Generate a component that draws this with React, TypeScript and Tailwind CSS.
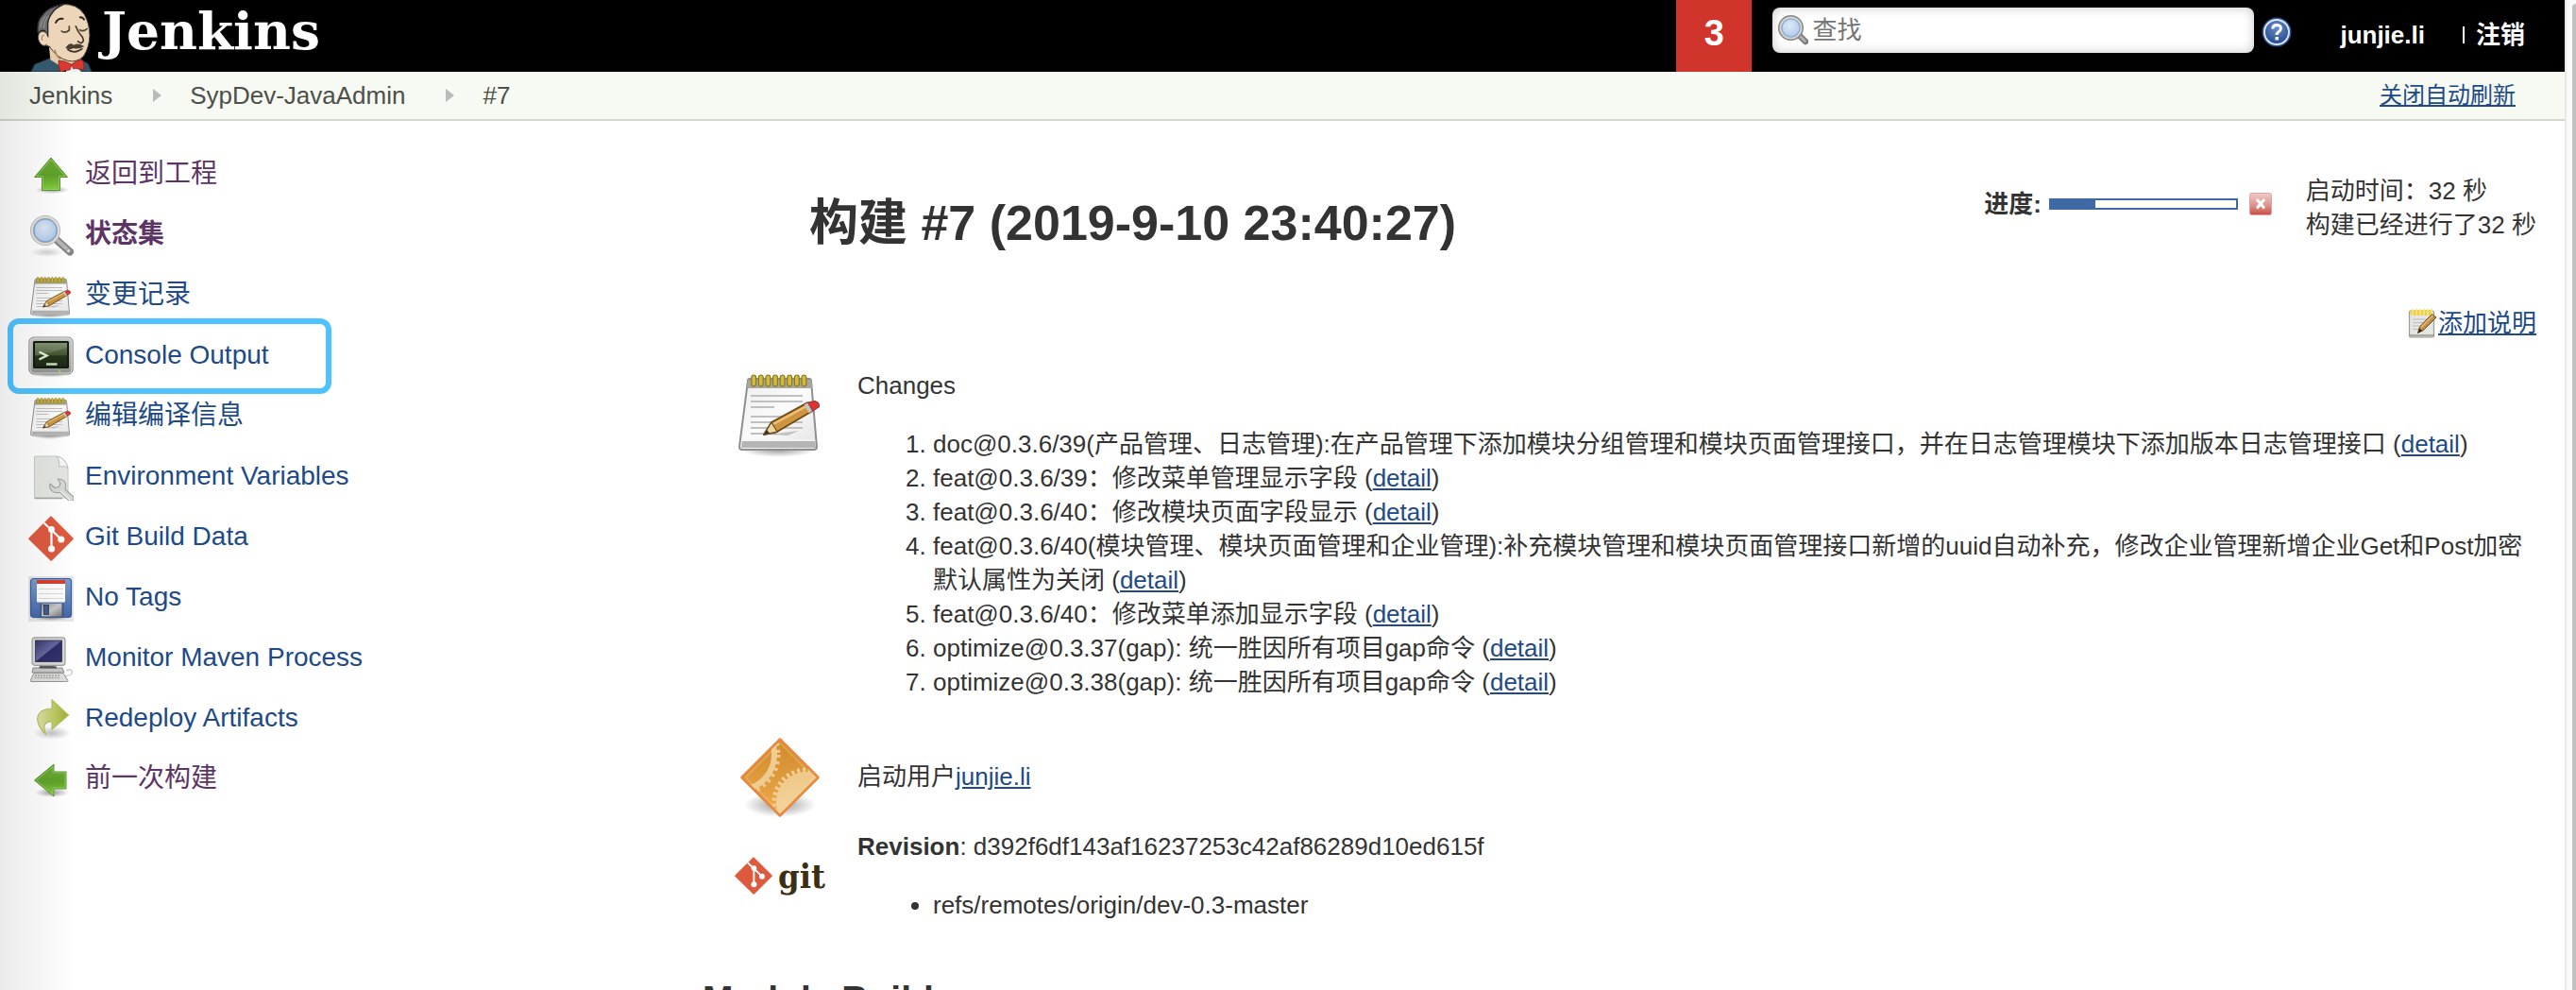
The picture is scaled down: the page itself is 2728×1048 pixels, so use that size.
import React from "react";

const SANS = "font-['Liberation_Sans','Noto_Sans_CJK_SC',sans-serif]";
const LINK = "text-[#204a87] underline";

/* ---------- shared gradients ---------- */

function Gradients() {
  return (
    <svg width="0" height="0" className="absolute" aria-hidden="true">
      <defs>
        <linearGradient id="green" x1="0" y1="0" x2="0" y2="1">
          <stop offset="0" stopColor="#6aa834" />
          <stop offset="0.55" stopColor="#5fa32a" />
          <stop offset="1" stopColor="#86cf3c" />
        </linearGradient>
        <linearGradient id="lime" x1="0" y1="0" x2="1" y2="0">
          <stop offset="0" stopColor="#dde2a8" />
          <stop offset="0.6" stopColor="#bcc75c" />
          <stop offset="1" stopColor="#9fae34" />
        </linearGradient>
        <linearGradient id="paper" x1="0" y1="0" x2="1" y2="1">
          <stop offset="0" stopColor="#ececec" />
          <stop offset="0.5" stopColor="#fbfbfb" />
          <stop offset="1" stopColor="#e4e4e4" />
        </linearGradient>
        <linearGradient id="screen" x1="0" y1="0" x2="0" y2="1">
          <stop offset="0" stopColor="#6f8360" />
          <stop offset="0.5" stopColor="#43562f" />
          <stop offset="0.55" stopColor="#27361c" />
          <stop offset="1" stopColor="#1d2916" />
        </linearGradient>
        <linearGradient id="metal" x1="0" y1="0" x2="0" y2="1">
          <stop offset="0" stopColor="#c9cac7" />
          <stop offset="0.8" stopColor="#a3a5a1" />
          <stop offset="1" stopColor="#8b8d89" />
        </linearGradient>
        <linearGradient id="floppy" x1="0" y1="0" x2="0" y2="1">
          <stop offset="0" stopColor="#7c9ecb" />
          <stop offset="1" stopColor="#4465a8" />
        </linearGradient>
        <linearGradient id="shutter" x1="0" y1="0" x2="1" y2="1">
          <stop offset="0" stopColor="#8d8d8d" />
          <stop offset="0.5" stopColor="#c9c9c9" />
          <stop offset="1" stopColor="#777" />
        </linearGradient>
        <linearGradient id="crt" x1="0" y1="0" x2="1" y2="1">
          <stop offset="0" stopColor="#36366e" />
          <stop offset="0.48" stopColor="#6668a0" />
          <stop offset="0.52" stopColor="#2c2c68" />
          <stop offset="1" stopColor="#34346f" />
        </linearGradient>
        <linearGradient id="stop" x1="0" y1="0" x2="0" y2="1">
          <stop offset="0" stopColor="#f0cdcb" />
          <stop offset="0.6" stopColor="#dd8d88" />
          <stop offset="1" stopColor="#cc4a43" />
        </linearGradient>
        <linearGradient id="orange" x1="0" y1="0" x2="0" y2="1">
          <stop offset="0" stopColor="#cf8a2b" />
          <stop offset="1" stopColor="#efaa4e" />
        </linearGradient>
        <linearGradient id="gear" x1="0" y1="0" x2="0" y2="1">
          <stop offset="0" stopColor="#efc888" />
          <stop offset="1" stopColor="#f8d9a6" />
        </linearGradient>
        <radialGradient id="lens" cx="0.45" cy="0.4" r="0.65">
          <stop offset="0" stopColor="#dfe9f6" />
          <stop offset="0.6" stopColor="#bcd2ee" />
          <stop offset="1" stopColor="#9bbbe3" />
        </radialGradient>
        <radialGradient id="help" cx="0.5" cy="0.3" r="0.7">
          <stop offset="0" stopColor="#6a8fc8" />
          <stop offset="1" stopColor="#21498c" />
        </radialGradient>
        <radialGradient id="shade">
          <stop offset="0" stopColor="#000" stopOpacity="0.4" />
          <stop offset="1" stopColor="#000" stopOpacity="0" />
        </radialGradient>
      </defs>
    </svg>
  );
}

/* ---------- icons ---------- */

type IconProps = { className?: string };

function Svg({ className = "size-12", box = "0 0 48 48", children }: IconProps & { box?: string; children: React.ReactNode }) {
  return (
    <svg className={`${className} shrink-0`} viewBox={box} aria-hidden="true">
      {children}
    </svg>
  );
}

const UpArrow = () => (
  <Svg>
    <ellipse cx="25" cy="39" rx="18" ry="4" fill="url(#shade)" />
    <path d="M24 5 41.5 25.500H33.500V39.500H14.500V25.500H6.500Z" fill="url(#green)" stroke="#5b9430" strokeWidth="1" />
    <path d="M24 6.800 39 24.500H32.500V38.500H15.500V24.500H9Z" fill="none" stroke="#a4d476" strokeOpacity="0.7" />
  </Svg>
);

const LeftArrow = () => (
  <Svg>
    <ellipse cx="25" cy="37" rx="18" ry="5" fill="url(#shade)" />
    <path d="M6.500 24 27 7V15H40V33H27V41Z" fill="url(#green)" stroke="#5b9430" strokeWidth="1" />
    <path d="M8.500 24 26 9.500V16H39V32H26V38.800Z" fill="none" stroke="#a4d476" strokeOpacity="0.7" />
  </Svg>
);

const Redo = () => (
  <Svg>
    <ellipse cx="25" cy="38" rx="20" ry="7" fill="url(#shade)" opacity="0.6" />
    <path d="M25 3 42.500 19 25 34V26C17 25.500 15 31 18.500 39 8 31 3.500 13 25 12Z" fill="url(#lime)" stroke="#b4bd62" strokeWidth="1.200" />
  </Svg>
);

const Magnifier = ({ className }: IconProps) => (
  <Svg className={className}>
    <ellipse cx="20" cy="41" rx="18" ry="5" fill="url(#shade)" opacity="0.45" />
    <path d="M30 28 44 40.500" stroke="#858585" strokeWidth="8" strokeLinecap="round" />
    <path d="M30.500 28 43 39.500" stroke="#b6b6b6" strokeWidth="4" strokeLinecap="round" />
    <circle cx="42.500" cy="39.500" r="2" fill="#e3e3e3" stroke="#888" strokeWidth="0.800" />
    <circle cx="18" cy="18" r="14" fill="url(#lens)" stroke="#b3b3b3" strokeWidth="4" />
    <circle cx="18" cy="18" r="14.200" fill="none" stroke="#e2e2e2" strokeWidth="2" />
    <circle cx="18" cy="18" r="12" fill="none" stroke="#7e9fce" strokeWidth="1" />
  </Svg>
);

const SearchGlass = () => (
  <Svg className="size-8" box="0 0 32 32">
    <path d="M24 23 29 28" stroke="#7c7c7a" strokeWidth="6.500" strokeLinecap="round" />
    <path d="M23.500 22.500 28.500 27.500" stroke="#b3b3b0" strokeWidth="2.500" strokeLinecap="round" />
    <circle cx="13.500" cy="13.500" r="12" fill="url(#lens)" stroke="#858582" strokeWidth="3" />
    <circle cx="13.500" cy="13.500" r="11" fill="none" stroke="#d5d5d2" strokeWidth="2" />
    <circle cx="13.500" cy="13.500" r="9.500" fill="none" stroke="#86a9d8" strokeWidth="1.200" />
  </Svg>
);

const Notepad = ({ className }: IconProps) => (
  <Svg className={className}>
    <ellipse cx="23" cy="43" rx="20" ry="4" fill="url(#shade)" />
    <path d="M7 6.500Q7 5.500 8 5.500H39.500Q40.500 5.500 40.500 6.500L43.500 41.500Q43.500 43 42 43H4Q2.500 43 2.500 41.500Z" fill="url(#paper)" stroke="#8f8f8f" strokeWidth="1" />
    <path d="M7 6H40.500L41 10.500H6.500Z" fill="#a5a69f" />
    <path d="M4 38.500H42.500L43 42H3.500Z" fill="#b5b5b5" />
    <path d="M4 38H42.500" stroke="#f5f5f5" strokeWidth="0.800" />
    {[10, 13.800, 17.600, 21.400, 25.200, 29, 32.800, 36.600].map((x) => (
      <rect key={x} x={x - 1.100} y="3.500" width="2.400" height="6" rx="1.200" fill="#d3b93c" stroke="#8d7a1f" strokeWidth="0.600" />
    ))}
    <path d="M8.500 14.500H36M8.500 17.500H36M8.500 20.500H21M8.500 25.500H36M8.500 28.500H36M8.500 31.500H36M8.500 34.500H22" stroke="#c0c0c0" strokeWidth="1" />
    <path d="M17 35 34 33 28 35.500Z" fill="#000" opacity="0.2" />
    <path d="M15.500 35 19.500 28.500 38.500 18.200 41.200 22.500 22.500 33.500Z" fill="#cd9540" stroke="#6c4a15" strokeWidth="0.900" strokeLinejoin="round" />
    <path d="M20.500 29.500 38 20" stroke="#eec078" strokeWidth="1.200" />
    <path d="M15.500 35 19.500 28.500 22.500 33.500Z" fill="#ead7a2" stroke="#6c4a15" strokeWidth="0.600" />
    <path d="M15.500 35 17 32.500 18.500 34.300Z" fill="#333" />
    <path d="M36.800 19.200 39 18 41.500 22.200 39.300 23.600Z" fill="#c4c4c4" />
    <path d="M38.800 18.100 42.500 17.300Q45 18 44.700 20.300L41.400 22.400Z" fill="#df3434" stroke="#a33" strokeWidth="0.600" />
  </Svg>
);

const Terminal = () => (
  <Svg>
    <ellipse cx="24" cy="42" rx="22" ry="3.500" fill="url(#shade)" />
    <rect x="0.800" y="3" width="46.400" height="39" rx="5" fill="url(#metal)" stroke="#8d8f8a" strokeWidth="1" />
    <rect x="2" y="4" width="44" height="37" rx="4" fill="none" stroke="#dcddda" strokeWidth="1" />
    <rect x="5" y="7" width="38" height="29" rx="1.500" fill="#141b10" />
    <rect x="7" y="9" width="34" height="25" fill="url(#screen)" />
    <path d="M7 9H41V14Q26 19 7 23Z" fill="#fff" opacity="0.13" />
    <path d="M11.500 18.500 19.500 22.500 11.500 26.500" fill="none" stroke="#dfeed6" strokeWidth="2.400" />
    <path d="M19 31.500H30.500" stroke="#cfe0c6" strokeWidth="2.400" />
    <circle cx="33" cy="39" r="1.300" fill="#8ed84c" />
  </Svg>
);

const PageWrench = () => (
  <Svg>
    <path d="M6.500 2Q6.500 1 7.500 1H30Q40 3 42 14V45H6.500Z" fill="#e4e6e2" stroke="#c8cac6" strokeWidth="1" />
    <path d="M30 1Q40 3 42 14Q40 11 32.500 12Q34 6 30 1Z" fill="#f7f7f7" stroke="#bfc1bd" strokeWidth="1" />
    <path d="M6.500 45.500H36" stroke="#a9aaa7" strokeWidth="1.500" />
    <path d="M23 30Q21.500 38 29 39.500L34 39.500 43 48H48V44L39 36Q41.500 28 35 25.500L31 25 34 29.500 32.500 33.500 28 34.500Z" fill="#d6d8d4" stroke="#9fa19d" strokeWidth="1.100" strokeLinejoin="round" />
    <path d="M34 38 44.500 47.500" stroke="#f4f4f4" strokeWidth="1.500" />
  </Svg>
);

const GitMark = ({ className }: IconProps) => (
  <Svg className={className}>
    <path d="M24.500 0.500 47.500 23.500Q48 24.300 47.500 25L25 47.500Q24.300 48 23.500 47.500L0.500 25Q0 24.300 0.500 23.500L23.500 0.500Z" fill="#de5a3f" />
    <path d="M16.500 7.500 36 26M24.500 15V35" stroke="#fff" strokeWidth="2.200" fill="none" />
    <circle cx="24.500" cy="14.500" r="3.400" fill="#fff" />
    <circle cx="34.800" cy="25" r="3.600" fill="#fff" />
    <circle cx="24.500" cy="35" r="3.600" fill="#fff" />
  </Svg>
);

const Floppy = () => (
  <Svg>
    <rect width="48" height="48" fill="#e6e6e8" />
    <ellipse cx="24" cy="44" rx="20" ry="3" fill="url(#shade)" />
    <rect x="2.500" y="2.500" width="43" height="41" rx="3" fill="url(#floppy)" stroke="#3c5d9d" strokeWidth="1.200" />
    <path d="M9 4H39V26.500Q39 27.500 38 27.500H10Q9 27.500 9 26.500Z" fill="#fdfdfd" />
    <rect x="9" y="4" width="30" height="4" fill="#d6402f" />
    <path d="M11 13.500H37M11 18.500H37M11 23.500H37" stroke="#dadada" strokeWidth="1" />
    <rect x="12.500" y="29" width="25" height="14" fill="#3e5888" />
    <rect x="14" y="29" width="21.500" height="13.500" rx="1" fill="url(#shutter)" />
    <rect x="16.500" y="30.500" width="5" height="10" fill="#3f5c98" stroke="#333" strokeWidth="0.800" />
  </Svg>
);

const Computer = () => (
  <Svg>
    <path d="M40 36Q47 33 46.500 38 46 41 38 42" fill="none" stroke="#c2c2c2" strokeWidth="1.300" />
    <path d="M13 30H27L30 34H10Z" fill="#6e6f6d" />
    <path d="M5 33H36L38 38H4Z" fill="#c9cac7" stroke="#8b8c89" />
    <rect x="4" y="0.800" width="35" height="29.500" rx="3" fill="#d9dad6" stroke="#a1a29f" strokeWidth="1.200" />
    <rect x="7.500" y="4" width="28" height="22.500" fill="url(#crt)" stroke="#2e2e55" strokeWidth="0.800" />
    <path d="M12 32.500H30" stroke="#555" strokeWidth="2" />
    <path d="M6 38.500H37L42 46.500Q42 47.500 41 47.500H3Q2 47.500 2.500 46Z" fill="#dfe0dc" stroke="#969794" strokeWidth="1" />
    <path d="M7 41H33M6.500 43.500H34" stroke="#a2a3a0" strokeWidth="1.300" strokeDasharray="2 1" />
  </Svg>
);

const GearDiamond = () => (
  <Svg className="size-24" box="0 0 96 96">
    <ellipse cx="48" cy="78" rx="38" ry="13" fill="url(#shade)" />
    <clipPath id="diamond">
      <path d="M48 9 88 49 48 89 8 49Z" />
    </clipPath>
    <path d="M48 8 89 49 48 90 7 49Z" fill="url(#orange)" />
    <g clipPath="url(#diamond)">
      <circle cx="5" cy="25" r="37" fill="none" stroke="#efcc92" strokeWidth="6" />
      <circle cx="5" cy="25" r="41" fill="none" stroke="#efcc92" strokeWidth="5" strokeDasharray="3 4" />
      <circle cx="76" cy="75" r="32" fill="url(#gear)" />
      <circle cx="76" cy="75" r="34" fill="none" stroke="#f2cf95" strokeWidth="5" strokeDasharray="3 3" />
    </g>
    <path d="M48 8.500 88.500 49 48 89.500 7.500 49Z" fill="none" stroke="#e58a3f" strokeWidth="2.500" strokeLinejoin="round" />
    <path d="M48 12.500 84.500 49 48 85.500 11.500 49Z" fill="none" stroke="#f5cf9a" strokeWidth="1" opacity="0.7" />
  </Svg>
);

const NotePencil = () => (
  <Svg className="size-8" box="0 0 32 32">
    <rect x="1.500" y="3" width="26" height="28" rx="1.500" fill="#e5e5e1" stroke="#9b9c92" strokeWidth="1.200" />
    <path d="M2 28H27V30.500H2Z" fill="#a9aaa2" />
    <path d="M5 12H22M5 15.500H18M5 19H16M5 22.500H12" stroke="#bcbcb8" strokeWidth="1.200" />
    <path d="M3 2H26V8H3Z" fill="#ecd04c" />
    <path d="M5 1V8M9 1V8M13 1V8M17 1V8M21 1V8M25 1V8" stroke="#f6e68e" strokeWidth="1.600" />
    <path d="M10.500 26.500 12.500 20 25.500 6.500 30 10 16.500 23.500Z" fill="#bf8f45" stroke="#6b4d1f" strokeWidth="1" />
    <path d="M14 20.500 26.500 8" stroke="#e5c184" strokeWidth="1.400" />
    <path d="M10.500 26.500 12 21.500 15.500 24.200Z" fill="#3a2b12" />
  </Svg>
);

const HelpIcon = () => (
  <Svg className="size-8" box="0 0 32 32">
    <circle cx="16" cy="16" r="15.500" fill="#294f92" />
    <circle cx="16" cy="16" r="13" fill="url(#help)" stroke="#dbe4f3" strokeWidth="2" />
    <path d="M11.800 12.500Q12 8.500 16.200 8.500 20.500 8.700 20.400 12.200 20.300 14.300 18 15.700 16.100 17 16.100 19" fill="none" stroke="#fff" strokeWidth="3" />
    <rect x="14.500" y="21" width="3.400" height="3.400" fill="#fff" />
  </Svg>
);

const StopIcon = () => (
  <Svg className="size-6" box="0 0 24 24">
    <rect x="0.500" y="0.500" width="23" height="23" rx="2" fill="url(#stop)" stroke="#dda5a1" />
    <path d="M8 7 16 16.500M16 7 8 16.500" stroke="#fff" strokeWidth="3" />
  </Svg>
);

const Butler = () => (
  <svg className="h-[76px] w-20 shrink-0" viewBox="0 0 240 228" aria-hidden="true">
    <path d="M14 228 26 204 76 184 104 200 118 228Z" fill="#34596f" stroke="#16252e" strokeWidth="3" />
    <path d="M168 186 196 202 208 228H160Z" fill="#34596f" stroke="#16252e" strokeWidth="3" />
    <path d="M72 150 76 190 108 210 160 206 178 180Z" fill="#e6cba9" />
    <path d="M46 66Q60 22 112 14 160 10 184 46 200 74 201 112 200 150 182 178 160 200 132 193 96 184 74 148L62 144Z" fill="#ecd5b9" stroke="#4a4038" strokeWidth="3" />
    <path d="M36 104Q32 66 50 48 70 20 118 14 90 26 80 44 66 62 68 84L68 114 58 98Q46 94 40 104Z" fill="#6b6a6e" stroke="#242326" strokeWidth="4" />
    <path d="M44 88Q46 66 62 50M55 90Q54 70 70 50" fill="none" stroke="#9a999d" strokeWidth="3" />
    <path d="M64 106Q50 94 40 106 32 124 46 140 56 150 66 140" fill="#ecd5b9" stroke="#5a4d41" strokeWidth="3" />
    <path d="M56 112Q46 112 50 128" fill="none" stroke="#8a745c" strokeWidth="3" />
    <path d="M92 74Q100 56 118 60M168 56Q178 52 184 64" fill="none" stroke="#2f2823" strokeWidth="6" />
    <path d="M110 98Q122 108 136 96V82M168 94Q180 104 194 90" fill="none" stroke="#4c433a" strokeWidth="5" />
    <path d="M156 82Q164 104 178 118 186 134 172 137L162 130" fill="none" stroke="#43372c" strokeWidth="5" />
    <path d="M124 152Q138 132 150 143 166 134 184 148 164 158 150 153 138 160 124 152Z" fill="#4a3e35" />
    <path d="M130 156Q152 174 178 154" fill="none" stroke="#3c2c25" strokeWidth="5" />
    <path d="M90 158Q94 178 108 188" fill="none" stroke="#a78c6c" strokeWidth="5" />
    <path d="M126 212 150 204 174 228H126Z" fill="#f1efec" />
    <path d="M102 192Q122 192 144 205L138 222Q120 224 112 228H108Q100 212 102 192Z" fill="#d93a30" stroke="#7a1c18" strokeWidth="2" />
    <path d="M144 204Q160 190 177 190 186 204 182 222 160 216 148 218Z" fill="#d93a30" stroke="#7a1c18" strokeWidth="2" />
  </svg>
);

const Crumb = () => (
  <svg className="h-4 w-3 shrink-0" viewBox="0 0 12 16" aria-hidden="true">
    <path d="M1 1 10 8 1 15Z" fill="#b9bcb6" />
  </svg>
);

/* ---------- data ---------- */

type Task = { label: string; icon: React.ReactNode; visited?: boolean; current?: boolean; marked?: boolean };

const tasks: Task[] = [
  { label: "返回到工程", icon: <UpArrow />, visited: true },
  { label: "状态集", icon: <Magnifier />, visited: true, current: true },
  { label: "变更记录", icon: <Notepad /> },
  { label: "Console Output", icon: <Terminal />, marked: true },
  { label: "编辑编译信息", icon: <Notepad /> },
  { label: "Environment Variables", icon: <PageWrench /> },
  { label: "Git Build Data", icon: <GitMark /> },
  { label: "No Tags", icon: <Floppy /> },
  { label: "Monitor Maven Process", icon: <Computer /> },
  { label: "Redeploy Artifacts", icon: <Redo /> },
  { label: "前一次构建", icon: <LeftArrow />, visited: true },
];

const changes = [
  "doc@0.3.6/39(产品管理、日志管理):在产品管理下添加模块分组管理和模块页面管理接口，并在日志管理模块下添加版本日志管理接口",
  "feat@0.3.6/39：修改菜单管理显示字段",
  "feat@0.3.6/40：修改模块页面字段显示",
  "feat@0.3.6/40(模块管理、模块页面管理和企业管理):补充模块管理和模块页面管理接口新增的uuid自动补充，修改企业管理新增企业Get和Post加密默认属性为关闭",
  "feat@0.3.6/40：修改菜单添加显示字段",
  "optimize@0.3.37(gap): 统一胜因所有项目gap命令",
  "optimize@0.3.38(gap): 统一胜因所有项目gap命令",
];

/* ---------- page parts ---------- */

function Header() {
  return (
    <header className="flex h-[76px] items-start bg-black pr-[42px] text-white">
      <a href="#home" className="flex items-start pl-7">
        <Butler />
        <span className="font-['DejaVu_Serif',serif] text-[55px] leading-[66px] font-bold">Jenkins</span>
      </a>
      <a href="#monitors" className="ml-auto flex w-20 justify-center self-stretch bg-[#d0342b] text-[38px] leading-[70px] font-bold">
        3
      </a>
      <form className="mt-2 ml-[22px] flex h-12 w-[510px] items-center rounded-lg bg-white pl-1.5 shadow-[inset_0_0_12px_rgba(0,0,0,0.22)]">
        <SearchGlass />
        <input
          type="search"
          aria-label="查找"
          placeholder="查找"
          className="min-w-0 flex-1 bg-transparent px-1 text-[26px] leading-9 text-[#333] outline-none placeholder:text-[#757575]"
        />
      </form>
      <a href="#help" aria-label="帮助" className="mt-[18px] ml-2">
        <HelpIcon />
      </a>
      <a href="#user" className="mt-[19px] ml-[51px] text-[26px] leading-9 font-bold">
        junjie.li
      </a>
      <span className="mt-[28px] ml-10 h-[18px] w-0.5 bg-white" />
      <a href="#logout" className="mt-[19px] ml-3 text-[26px] leading-9 font-bold">
        注销
      </a>
    </header>
  );
}

function Breadcrumbs() {
  return (
    <nav className="flex items-center border-b-2 border-[#d3d7cf] bg-[#f6faf2] pr-[52px] pl-[31px] text-[26px] leading-[50px] text-[#4d4f4a]">
      <a href="#home">Jenkins</a>
      <span className="pr-7 pl-[42px]">
        <Crumb />
      </span>
      <a href="#job">SypDev-JavaAdmin</a>
      <span className="pr-7 pl-[42px]">
        <Crumb />
      </span>
      <a href="#build">#7</a>
      <a href="#refresh" className="ml-auto text-2xl leading-[50px] text-[#204a87] underline">
        关闭自动刷新
      </a>
    </nav>
  );
}

function Sidebar() {
  return (
    <nav className="w-[744px] shrink-0 pt-[34px] pl-[30px]">
      <ul className="flex flex-col gap-4">
        {tasks.map((t) => (
          <li key={t.label} className="relative">
            <a
              href="#task"
              className={`flex items-start gap-3 text-[28px] leading-[44px] ${t.visited ? "text-[#5c3566]" : "text-[#204a87]"} ${t.current ? "font-bold" : ""}`}
            >
              {t.icon}
              {t.label}
            </a>
            {t.marked && (
              <span className="pointer-events-none absolute top-[-17px] left-[-22px] h-20 w-[343px] rounded-xl border-[6px] border-[#4fc3ff]" />
            )}
          </li>
        ))}
      </ul>
    </nav>
  );
}

function Progress({ percent }: { percent: number }) {
  return (
    <div className="mt-3.5 flex items-center gap-2 leading-9">
      <b id="progress-label">进度:</b>
      <div
        role="progressbar"
        aria-labelledby="progress-label"
        aria-valuenow={percent}
        className="h-3 w-[200px] border-2 border-[#3e69a5]"
      >
        <div className="h-full bg-[#3e69a5]" style={{ width: `${percent}%` }} />
      </div>
      <button type="button" aria-label="停止" className="ml-1">
        <StopIcon />
      </button>
    </div>
  );
}

function BuildDetails() {
  return (
    <main className="min-w-0 flex-1 pt-14 pr-[30px]">
      <div className="flex items-start">
        <h1 className="mt-[22px] pl-[113px] text-[52px] leading-[60px] font-bold">构建 #7 (2019-9-10 23:40:27)</h1>
        <div className="ml-auto flex items-start gap-9">
          <Progress percent={24} />
          <div className="leading-9">
            <p>启动时间：32 秒</p>
            <p>构建已经进行了32 秒</p>
          </div>
        </div>
      </div>

      <div className="mt-[58px] flex justify-end leading-9">
        <a href="#description" className="flex items-center text-[#204a87]">
          <NotePencil />
          <span className="underline">添加说明</span>
        </a>
      </div>

      <div className="pl-[34px] leading-9">
        <section className="mt-[30px] flex items-start gap-[34px]">
          <Notepad className="size-24" />
          <div className="min-w-0 flex-1">
            <p>Changes</p>
            <ol className="mt-[26px] list-decimal pl-20">
              {changes.map((c) => (
                <li key={c}>
                  {c} (
                  <a href="#detail" className={LINK}>
                    detail
                  </a>
                  )
                </li>
              ))}
            </ol>
          </div>
        </section>

        <section className="mt-[34px] flex items-center gap-[34px]">
          <GearDiamond />
          <p>
            启动用户
            <a href="#user" className={LINK}>
              junjie.li
            </a>
          </p>
        </section>

        <section className="mt-2 flex items-center gap-[34px]">
          <div className="flex w-24 items-center gap-1.5">
            <GitMark className="size-10" />
            <span className="font-['DejaVu_Serif_Condensed','DejaVu_Serif',serif] text-[36px] leading-9 font-bold text-[#3b2f12]">git</span>
          </div>
          <div>
            <p>
              <b>Revision</b>: d392f6df143af16237253c42af86289d10ed615f
            </p>
            <ul className="mt-[26px] list-disc pl-20">
              <li>refs/remotes/origin/dev-0.3-master</li>
            </ul>
          </div>
        </section>
      </div>

      <h2 className="mt-[58px] text-[39px] leading-[48px] font-bold">Module Builds</h2>
    </main>
  );
}

export default function App() {
  return (
    <div className={`flex h-screen overflow-hidden bg-white text-[26px] text-[#333] ${SANS}`}>
      <Gradients />
      <div className="min-w-0 flex-1">
        <Header />
        <div className="relative">
          <Breadcrumbs />
          <div className="flex items-start">
            <Sidebar />
            <BuildDetails />
          </div>
          <div className="pointer-events-none absolute inset-y-0 left-0 w-20 bg-linear-to-r from-black/8 to-transparent" />
        </div>
      </div>
      <div className="flex w-3 shrink-0 border-l-2 border-[#e8e8e8] bg-[#fafafa] pt-1 pl-1.5">
        <div className="flex-1 rounded-tl bg-[#c1c1c1]" />
      </div>
    </div>
  );
}
